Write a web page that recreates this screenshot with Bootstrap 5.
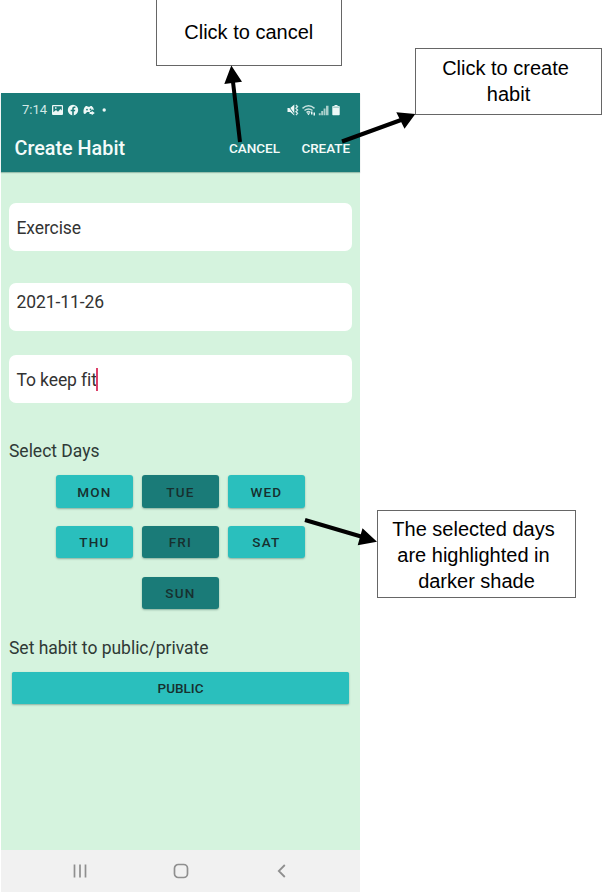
<!DOCTYPE html>
<html lang="en">
<head>
<meta charset="utf-8">
<meta name="viewport" content="width=device-width, initial-scale=1">
<title>Create Habit</title>
<link href="https://cdn.jsdelivr.net/npm/bootstrap@5.3.0/dist/css/bootstrap.min.css" rel="stylesheet">
<style>
body { width: 604px; height: 896px; overflow: hidden; background: #fff; }
.phone { width: 359px; height: 799px; margin: 92.6px 0 0 1px; background: #d5f3de; font-family: Roboto, sans-serif; color: #2f3a36; }
.app-head { height: 79px; background: #1a7b78; color: #f4fbfa; box-shadow: 0 1px 1px rgba(0,60,50,.28); }
.status-line { height: 35px; padding: 0 19px 0 21px; font-size: 13px; color: #d3e9e7; }
.bar-line { height: 42px; padding: 0 10px 0 13.5px; }
.app-title { font-size: 19.8px; font-weight: 500; line-height: 40px; }
.bar-action { font-size: 13.5px; font-weight: 500; line-height: 38px; padding-bottom: 2px; letter-spacing: -.05px; color: #f4fbfa; text-decoration: none; }
.bar-action + .bar-action { margin-left: 21.5px; }
.form-area { padding: 31.6px 8.4px 0; }
.field { height: 47.7px; padding: 0 7px; border-radius: 7px; background: #fff; font-size: 17.5px; letter-spacing: -.08px; line-height: 20px; color: #333; }
.field-name { padding-top: 2px; }
.field-date { margin-top: 32px; padding-top: 9.4px; }
.field-reason { margin-top: 24.7px; padding-top: 1.4px; }
.text-cursor { width: 2px; height: 23px; margin-left: -.6px; background-color: #dc3f68; }
.field-label { font-size: 17.5px; line-height: 20px; margin-left: -.4px; letter-spacing: -.02px; }
.label-days { margin-top: 38px; margin-bottom: 14.5px; }
.label-visibility { margin-top: 28.8px; margin-bottom: 14px; }
.days { width: 249px; column-gap: 9px; row-gap: 18.6px; margin-left: 46.5px; }
.day { width: 77px; height: 32.2px; border: 0; border-radius: 3px; padding: 0; background: #2abfbd; color: #17302f; font-size: 13.5px; font-weight: 500; letter-spacing: 1.2px; line-height: 32px; box-shadow: 0 1px 2px rgba(0,50,40,.35); }
.day.chosen { background: #1a7b78; }
.visibility { height: 32.3px; margin: 0 3px; border: 0; border-radius: 1.5px; padding: 0; background: #2abfbd; color: #17302f; font-size: 13.5px; font-weight: 500; line-height: 32px; box-shadow: 0 1px 2px rgba(0,50,40,.35); }
.sys-nav { height: 41.6px; background: #f1f1f1; padding: 0 69px; }
.note { background: #fff; border: 1px solid #666; color: #000; font: 20px/26px "Liberation Sans", Arial, sans-serif; }
.note-cancel { left: 155.5px; top: -2px; width: 186.5px; height: 68px; }
.note-create { left: 415px; top: 48px; width: 187px; height: 67px; padding: 0 6px 2px 0; }
.note-days { left: 377px; top: 510px; width: 199px; height: 88px; padding: 2px 6px 0 0; }
.last-line { padding-left: 6px; }
.arrows { left: 0; top: 0; pointer-events: none; }
</style>
</head>
<body class="position-relative">
<main class="phone d-flex flex-column">
  <header class="app-head flex-shrink-0">
    <div class="status-line d-flex align-items-center">
      <span>7:14</span>
      <svg width="60" height="14" viewBox="0 0 60 14" class="ms-1">
        <path fill="#eef8f7" fill-rule="evenodd" d="M2 2h9q1 0 1 1v8q0 1-1 1H2q-1 0-1-1V3q0-1 1-1Zm.3 1.300v6L5 7l2 1.700L9.500 6l1.300 1.500V3.300ZM4 4.300h1.500v1.500H4Z"/>
        <circle cx="22" cy="7" r="5.200" fill="#eef8f7"/>
        <path fill="#1a7b78" d="M21.200 12.500V8.300h-1.500V6.700h1.500V5.500q0-2 2-2h1.200v1.500h-.8q-.8 0-.8.8v.9h1.500l-.3 1.600h-1.200v4.200Z"/>
        <path fill="#eef8f7" d="M32.500 9.500q-.4-4.500 2.300-6.500h1.300l.7.800h2l.7-.8h1.200q2 1.500 2.200 4l-1.600-.5-2.200 1.500v1h-3l-2 2q-1.500 0-1.600-1.500Z"/>
        <circle cx="36" cy="6.600" r=".9" fill="#1a7b78"/><circle cx="39.500" cy="6.300" r=".9" fill="#1a7b78"/>
        <path fill="#eef8f7" d="M38.500 9h2.200V7.800L43.800 10l-3.100 2.200V11h-2.200Z"/>
        <circle cx="53.200" cy="7" r="1.700" fill="#eef8f7"/>
      </svg>
      <svg width="54" height="14" viewBox="0 0 54 14" class="ms-auto">
        <path fill="#eef8f7" d="M.5 5h2.800L7.300 1.500v11L3.300 9H.5Z"/>
        <path d="M9 2l1.500 1.700L9 5.300 10.500 7 9 8.700l1.500 1.600L9 12" fill="none" stroke="#d3e9e7" stroke-width="1.400"/>
        <path d="m.5 1.800 7 9.500" stroke="#1a7b78" stroke-width=".9"/>
        <path d="M15.500 5.300q6-5 12 0M17.500 7.500q4-3.200 8 0M19.500 9.500q2-1.700 3.800 0" fill="none" stroke="#c8e2df" stroke-width="1.500"/>
        <path fill="#eef8f7" d="m21.500 12.300-1.600-2h3.200ZM24 8.500h1.500v3H24ZM26.500 9.500H28v3h-1.500Z"/>
        <path fill="#a9d0cc" d="M31.800 12.300v-2h1.900v2ZM34.200 12.300V8h1.900v4.300ZM36.600 12.300V5.500h1.900v6.800ZM39 12.300V2.800h2.500v9.500Z"/>
        <path fill="#eef8f7" d="M47.500 2h3v1h1.500q.7 0 .7.700v7.800q0 .7-.7.700h-6q-.7 0-.7-.7V3.700q0-.7.700-.7h1.500Z"/>
        <path fill="#a7d0cc" d="M46.200 3.500h5.700V5h-5.700Z"/>
      </svg>
    </div>
    <nav class="bar-line d-flex align-items-center">
      <span class="app-title me-auto">Create Habit</span>
      <a class="bar-action" href="#">CANCEL</a>
      <a class="bar-action" href="#">CREATE</a>
    </nav>
  </header>

  <section class="form-area flex-grow-1">
    <div class="field field-name d-flex align-items-center">Exercise</div>
    <div class="field field-date d-flex align-items-start">2021-11-26</div>
    <div class="field field-reason d-flex align-items-center">To keep fit<span class="text-cursor"></span></div>
    <div class="field-label label-days">Select Days</div>
    <div class="days d-flex flex-wrap justify-content-center">
      <button class="day">MON</button>
      <button class="day chosen">TUE</button>
      <button class="day">WED</button>
      <button class="day">THU</button>
      <button class="day chosen">FRI</button>
      <button class="day">SAT</button>
      <button class="day chosen">SUN</button>
    </div>
    <div class="field-label label-visibility">Set habit to public/private</div>
    <div class="d-grid"><button class="visibility">PUBLIC</button></div>
  </section>

  <footer class="sys-nav d-flex justify-content-between align-items-center flex-shrink-0">
    <svg width="20" height="16" viewBox="0 0 20 16"><path d="M4.500 1.500v13M10 1.500v13M15.500 1.500v13" stroke="#8f8f8f" stroke-width="1.700" fill="none"/></svg>
    <svg width="18" height="18" viewBox="0 0 18 18"><rect x="2.500" y="2.500" width="13" height="13" rx="3.800" fill="none" stroke="#8f8f8f" stroke-width="1.700"/></svg>
    <svg width="20" height="16" viewBox="0 0 20 16"><path d="M13.800 2 7.800 8l6 6" stroke="#8f8f8f" stroke-width="1.800" fill="none"/></svg>
  </footer>
</main>

<aside class="note note-cancel position-absolute d-flex align-items-center justify-content-center">Click to cancel</aside>
<aside class="note note-create position-absolute d-flex flex-column align-items-center justify-content-center"><span>Click to create</span><span class="last-line">habit</span></aside>
<aside class="note note-days position-absolute d-flex flex-column align-items-center justify-content-center"><span>The selected days</span><span>are highlighted in</span><span class="last-line">darker shade</span></aside>

<svg class="arrows position-absolute" width="604" height="896" viewBox="0 0 604 896">
  <path d="M240 142 233 82M342 141.500 401 120M305 520 361 536.500" stroke="#000" stroke-width="4" fill="none"/>
  <path d="M231.300 65.500 224.300 84 242 81.800ZM415.300 114 396.300 112.200 404.500 128.700ZM377 541.700 362.500 528.200 357.700 545.200Z"/>
</svg>
<script src="https://cdn.jsdelivr.net/npm/bootstrap@5.3.0/dist/js/bootstrap.bundle.min.js"></script>
</body>
</html>
